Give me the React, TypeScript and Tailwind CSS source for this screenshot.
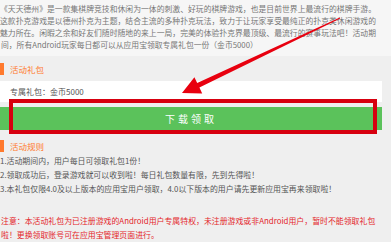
import React from 'react'

const intro = [
  '《天天德州》是一款集棋牌竞技和休闲为一体的刺激、好玩的棋牌游戏，也是目前世界上最流行的棋牌手游。',
  '这款扑克游戏是以德州扑克为主题，结合主流的多种扑克玩法，致力于让玩家享受最纯正的扑克类休闲游戏的',
  '魅力所在。闲暇之余和好友们随时随地的来上一局，完美的体验扑克界最顶级、最流行的赛事玩法吧！活动期',
]

const rules = [
  '1.活动期间内，用户每日可领取礼包1份！',
  '2.领取成功后，登录游戏就可以收到啦！每日礼包数量有限，先到先得啦！',
  '3.本礼包仅限4.0及以上版本的应用宝用户领取，4.0以下版本的用户请先更新应用宝再来领取啦！',
]

function SectionTitle({ children }: { children: React.ReactNode }) {
  return (
    <div className="flex h-[12px] items-center gap-[6px]">
      <span className="h-[12px] w-[4px] bg-[#ff7a2e]" />
      <span className="text-[8.5px] leading-[12px] text-[#ff7a2e]">{children}</span>
    </div>
  )
}

export default function App() {
  return (
    <div
      className="relative h-[242px] w-[391px] overflow-hidden bg-[#efefef]"
      style={{ fontFamily: '"Noto Sans CJK SC", "Noto Sans", sans-serif' }}
    >
      <div className="bg-[#f6f6f6] pt-[3px] pb-[5px] text-[#777]">
        {intro.map((line) => (
          <div
            key={line}
            className="w-[376px] whitespace-nowrap text-justify text-[7.8px] leading-[12px] [text-align-last:justify]"
          >
            {line}
          </div>
        ))}
        <div className="whitespace-nowrap pl-[1px] text-[7.8px] leading-[12px]">
          间，所有Android玩家每日都可以从应用宝领取专属礼包一份（金币5000）
        </div>
      </div>

      <div className="pt-[7px]">
        <SectionTitle>活动礼包</SectionTitle>
      </div>

      <div className="mt-[6px] w-[382px]">
        <div className="flex h-[21px] items-center bg-white pl-[10px] text-[8px] text-[#555]">
          专属礼包：金币5000
        </div>
        <div className="mt-[5px] flex h-[23px] items-center justify-center bg-[#5bc25b] text-[10px] tracking-[3px] text-white">
          下载领取
        </div>
      </div>

      <div className="mt-[10px]">
        <SectionTitle>活动规则</SectionTitle>
      </div>

      <div className="mt-[2px] text-[#555]">
        {rules.map((r) => (
          <div key={r} className="whitespace-nowrap text-[7.9px] leading-[14px]">
            {r}
          </div>
        ))}
      </div>

      <div className="mt-[18px] pl-[1px] text-[#e4262b]">
        <div className="whitespace-nowrap text-[7.9px] leading-[14px]">
          注意：本活动礼包为已注册游戏的Android用户专属特权，未注册游戏或非Android用户，暂时不能领取礼包
        </div>
        <div className="whitespace-nowrap text-[7.9px] leading-[14px]">啦！更换领取账号可在应用宝管理页面进行。</div>
      </div>

      {/* annotation overlay */}
      <div className="pointer-events-none absolute left-[9px] top-[99px] h-[35px] w-[368px] border-[4px] border-[#d7000f]" />
      <svg className="pointer-events-none absolute inset-0" width="391" height="242" viewBox="0 0 391 242">
        <polygon
          points="182,93 202.2,93.4 199.4,87.6 340.2,18.4 339.8,17.6 197.2,83 194.4,77.2"
          fill="#e8000f"
        />
      </svg>
    </div>
  )
}
